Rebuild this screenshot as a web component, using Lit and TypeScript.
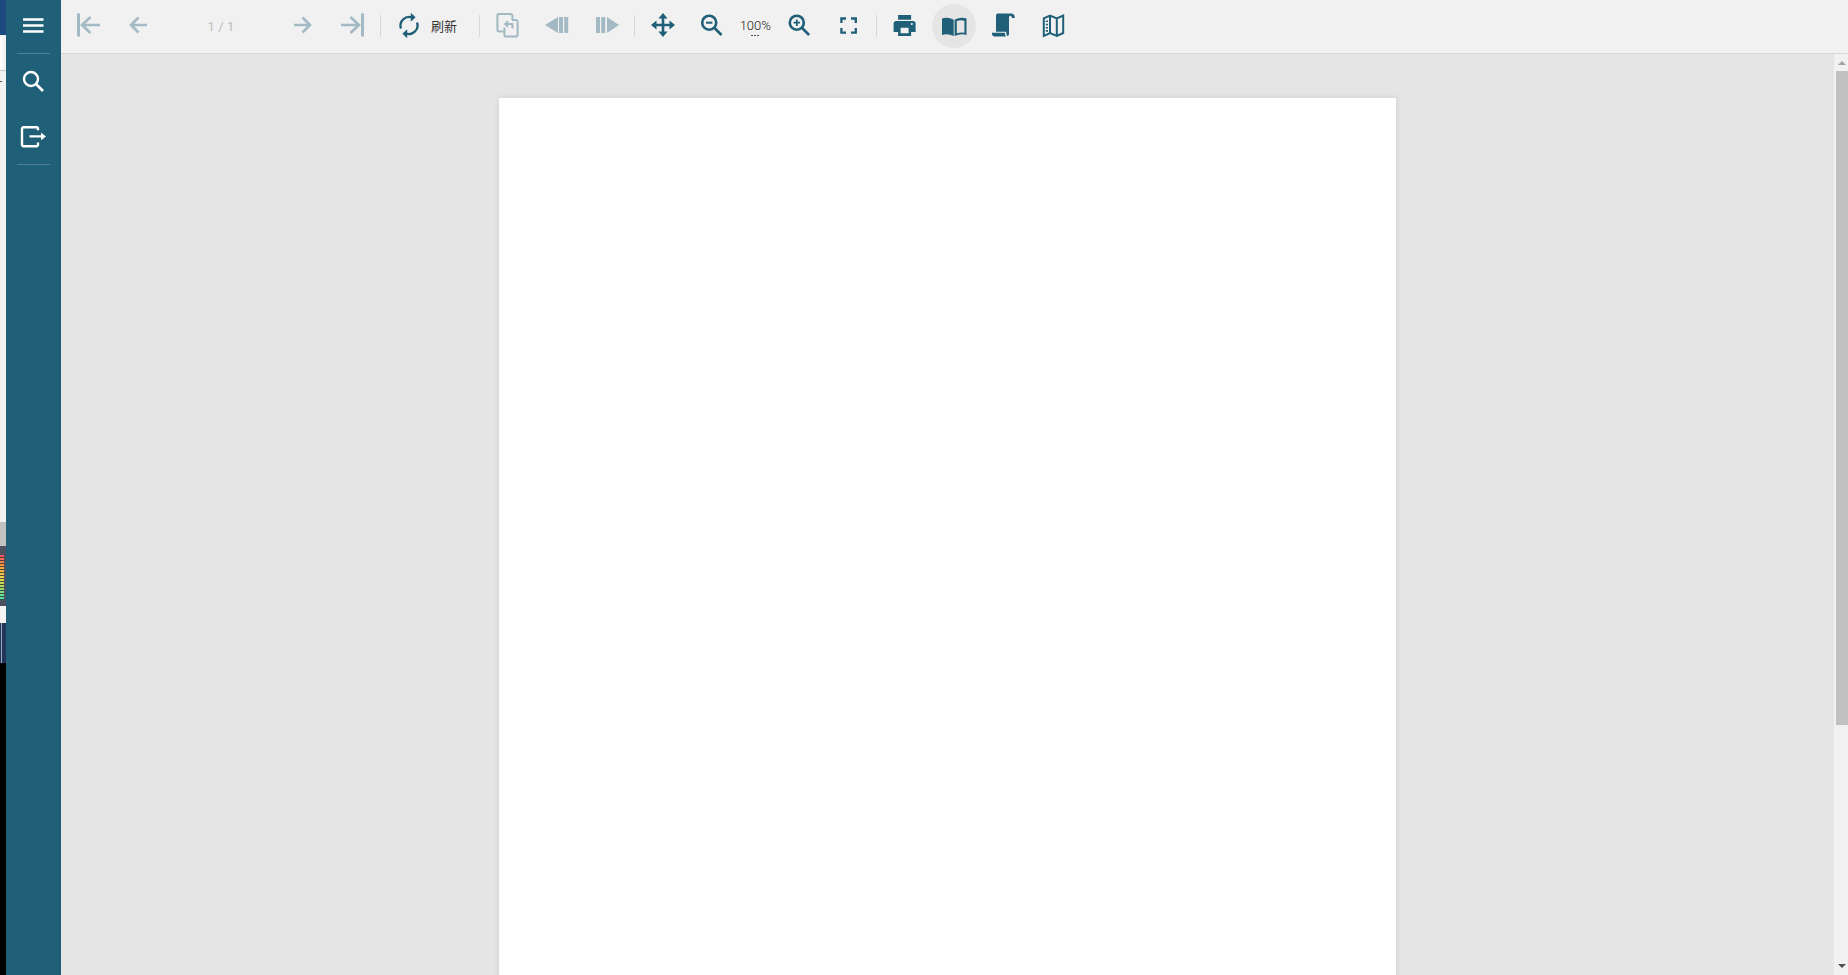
import { LitElement, html, css, svg } from "lit";
import { customElement } from "lit/decorators.js";

const ic = (body: unknown) => html`<svg class="ic" viewBox="0 .5 24 24" width="24" height="24">${body}</svg>`;

const first = svg`<rect x="1" y="0" width="3" height="23"/><path class="s" d="M6 11.5H24M14.5 3.5L6 11.5L14.5 19.5"/>`;
const prev = svg`<path class="s" d="M5 11.5H21M12.5 4L5 11.5L12.5 19"/>`;
const next = svg`<path class="s" d="M3 11.5H19M11.5 4L19 11.5L11.5 19"/>`;
const last = svg`<rect x="21" y="0" width="3" height="23"/><path class="s" d="M1 11.5H19M10.5 3.5L19 11.5L10.5 19.5"/>`;
const refresh = svg`<g transform="translate(1 0)"><path class="s t2" d="M4 15A8.6 8.6 0 0 1 15.5 4.2"/><path d="M13.8 -.8L18.6 3.7L13.8 8.2Z"/><path class="s t2" d="M20 9A8.6 8.6 0 0 1 8.5 19.8"/><path d="M10.2 24.8L5.4 20.3L10.2 15.8Z"/></g>`;
const copy = svg`<path class="s t" d="M7.6 18H3.2A1.8 1.8 0 0 1 1.4 16.2V2.2A1.8 1.8 0 0 1 3.2 .4H14.6A1.8 1.8 0 0 1 16.4 2.2V6.4"/><path class="s t" d="M8.4 14V21.2A1.8 1.8 0 0 0 10.2 23H19.8A1.8 1.8 0 0 0 21.6 21.2V8.2A1.8 1.8 0 0 0 19.8 6.4H16"/><path class="s t" d="M16.4 15V10.4H9.4M12 7.6L9.2 10.4L12 13.2"/>`;
const stepPrev = svg`<path d="M0 11.5L13 3.5V19.5Z"/><rect x="14" y="3.5" width="4" height="16"/><rect x="19.2" y="3.5" width="4" height="16"/>`;
const stepNext = svg`<rect x="1" y="3.5" width="4" height="16"/><rect x="6.2" y="3.5" width="4" height="16"/><path d="M12 3.5L24 11.5L12 19.5Z"/>`;
const move = svg`<path class="s" d="M2 11.5H22M12 2V21.5"/><path d="M12 -.5L16.6 5H7.4ZM12 23.5L7.4 18H16.6ZM0 11.5L5.5 7V16ZM24 11.5L18.5 16V7Z"/>`;
const zoomOut = svg`<circle class="s" cx="9.2" cy="9.2" r="7"/><path class="s" d="M14.5 14.5L21.5 21.5"/><rect x="6" y="8.2" width="6.4" height="2"/>`;
const zoomIn = svg`<g transform="translate(.6 0)"><circle class="s" cx="9.2" cy="9.2" r="7"/><path class="s" d="M14.5 14.5L21.5 21.5"/><path d="M6 8.3H8.3V6H10.1V8.3H12.4V10.1H10.1V12.4H8.3V10.1H6Z"/></g>`;
const full = svg`<path class="s t2" d="M5.4 9.4V5H10M15 5H19.8V9.4M19.8 14.6V19.2H15M10 19.2H5.4V14.6"/>`;
const print = svg`<path transform="translate(.6 0)" d="M5.5 1.4H18.5V6.2H5.5ZM3.6 7.6H20.4A2.6 2.6 0 0 1 23 10.2V18.4H18.5V22.4H5.5V18.4H1V10.2A2.6 2.6 0 0 1 3.6 7.6ZM8 14.2V19.8H16V14.2ZM19.2 9.4A1.1 1.1 0 1 0 19.2 11.6A1.1 1.1 0 1 0 19.2 9.4Z" fill-rule="evenodd"/>`;
const book = svg`<path fill-rule="evenodd" d="M0 5A16 16 0 0 1 11.7 6.2V22.5A18 18 0 0 0 0 21.4ZM12.6 6.2A16 16 0 0 1 24.5 5V21.4A18 18 0 0 0 12.6 22.5ZM14.8 7.6V19.8A18 18 0 0 1 22.4 19.2V7.2A14 14 0 0 0 14.8 7.6Z"/>`;
const scroll = svg`<path d="M6.8 0H20.5C22.6 0 23.8 1.6 23.8 4.4L20.9 4.4C20.9 3.2 20.3 2.2 19.4 2.2C18.4 2.2 18 3 18 4.5V20.6C18 21.4 17.6 22.4 16.4 22.6C15.6 21.4 15.2 20.2 15.2 18.2H5V2.5C5 1 5.6 0 6.8 0Z"/><path d="M1 19.2H13.8C13.9 20.6 14.3 21.8 15 23H3.8C2 23 .7 21.2 1 19.2Z"/>`;
const map = svg`<g transform="translate(.8 0)"><path class="s t" d="M2 4.8L8.2 2L15 4.8L21.4 2V19.5L15 22.5L8.2 19.5L2 22.5ZM8.2 2V19.5M15 4.8V22.5"/><path d="M4 7H6.2V8.6H4ZM4 10.2H6.2V11.8H4ZM4 13.4H6.2V15H4ZM4 16.6H6.2V18.2H4Z"/></g>`;

@customElement("app-root")
export class AppRoot extends LitElement {
  static styles = css`
    :host { display: block; height: 100vh; overflow: hidden; font-family: Roboto, "Noto Sans CJK SC", sans-serif; }
    .app { display: flex; height: 100%; }
    .strip { width: 6px; flex: none; display: flex; flex-direction: column; background: #f2f2f2; }
    .blue { height: 35px; background: #1c4a80; }
    .pale { height: 36px; background: linear-gradient(90deg, #fff, #eee); border-bottom: 1px solid #c8c8c8; box-sizing: border-box; }
    .rest { height: 451px; background: #f2f2f2; padding-top: 10px; box-sizing: border-box; }
    .tick { width: 2px; height: 1px; background: #555; }
    .grey { height: 24px; background: #c2c2c2; }
    .eq { height: 60px; background: #4c5160; padding: 9px 2px 6px 0; box-sizing: border-box; }
    .bars { height: 45px; width: 4px; background: repeating-linear-gradient(180deg, transparent 0 2px, rgba(40,44,56,.8) 2px 3px), linear-gradient(180deg, #f0525e, #f5a13c 25%, #ead44e 50%, #a8dc62 70%, #48e0b0); }
    .white { height: 17px; background: #f4f4f4; }
    .navy { height: 40px; background: linear-gradient(90deg, #23345a 0 1px, #9aa8c0 1px 2px, #23345a 2px); }
    .black { flex: 1; background: #000; }
    .side { width: 55px; flex: none; background: #1f5f78; display: flex; flex-direction: column; align-items: center; }
    .sb { width: 55px; height: 55px; display: flex; align-items: center; justify-content: center; padding-right: 1px; box-sizing: border-box; }
    .sb.top { height: 53px; padding-bottom: 6px; }
    .sb.find { padding-bottom: 2px; }
    .rule { width: 33px; height: 1px; flex: none; background: #4f8094; }
    .sb svg { fill: none; stroke: #fff; stroke-width: 2.4; }
    .main { flex: 1; min-width: 0; display: flex; flex-direction: column; }
    .bar { height: 54px; flex: none; box-sizing: border-box; border-bottom: 1px solid #dadada; padding-bottom: 1px; background: #f1f1f1; display: flex; align-items: center; gap: 5.5px; padding-left: 5px; }
    .btn { width: 44px; height: 44px; flex: none; display: flex; align-items: center; justify-content: center; border-radius: 50%; color: #1f5f78; }
    .btn.on { background: #e5e5e5; }
    .off { opacity: .37; }
    .ic { fill: currentColor; overflow: visible; display: block; }
    .ic .s { fill: none; stroke: currentColor; stroke-width: 2.6; }
    .ic .t { stroke-width: 2; }
    .ic .t2 { stroke-width: 2.3; }
    .sep { width: 1px; height: 22px; flex: none; background: #d8d8d8; }
    .pager { width: 110px; flex: none; display: flex; justify-content: center; padding-left: 2px; box-sizing: border-box; font-size: 13px; color: #bbb; letter-spacing: .1px; }
    .refresh { display: flex; align-items: center; width: 87.5px; flex: none; }
    .label { font-size: 13px; color: #333; font-family: "Noto Sans CJK SC", sans-serif; padding: 0 0 2px 1px; }
    .pct { width: 31.5px; flex: none; display: flex; flex-direction: column; align-items: center; font-size: 13px; font-weight: 300; color: #222; line-height: 15px; padding-top: 3px; box-sizing: border-box; }
    .dots { display: flex; gap: 1px; margin-top: 2px; height: 2px; }
    .dots i { width: 2px; height: 1px; background: #555; }
    .view { flex: 1; min-height: 0; display: flex; }
    .canvas { flex: 1; background: #e5e5e5; display: flex; justify-content: center; padding-top: 44px; overflow: hidden; }
    .page { width: 897px; height: 1270px; flex: none; background: #fff; box-shadow: 0 0 6px rgba(0,0,0,.1); }
    .scroll { width: 14px; flex: none; background: #f1f1f1; display: flex; flex-direction: column; align-items: flex-end; padding-top: 7px; box-sizing: border-box; }
    .up, .down { align-self: center; margin-left: 2px; width: 0; height: 0; border-left: 4px solid transparent; border-right: 4px solid transparent; }
    .up { border-bottom: 4px solid #a3a3a3; }
    .thumb { width: 12px; height: 654px; background: #c1c1c1; margin-top: 6px; }
    .gap { flex: 1; }
    .down { border-top: 4px solid #505050; margin-bottom: 7px; }
  `;

  render() {
    return html`<div class="app">
      <div class="strip">
        <div class="blue"></div><div class="pale"></div>
        <div class="rest"><div class="tick"></div></div>
        <div class="grey"></div>
        <div class="eq"><div class="bars"></div></div>
        <div class="white"></div><div class="navy"></div><div class="black"></div>
      </div>
      <nav class="side">
        <div class="sb top"><svg width="24" height="24" viewBox="0 0 24 24"><path d="M2 7.5H22.5M2 13.5H22.5M2 19.5H22.5" stroke-width="2.3"/></svg></div>
        <div class="rule"></div>
        <div class="sb find"><svg width="24" height="24" viewBox="0 0 24 24"><circle cx="10" cy="10" r="7"/><path d="M15 15L22 22" stroke-width="2.6"/></svg></div>
        <div class="sb"><svg width="28" height="24" viewBox="0 0 28 24"><path d="M19 5.2V3.8A1.6 1.6 0 0 0 17.4 2.2H4.6A1.6 1.6 0 0 0 3 3.8V19.6A1.6 1.6 0 0 0 4.6 21.2H17.4A1.6 1.6 0 0 0 19 19.6V17.5M10.5 11.4H24" /><path d="M22 7.5L27 11.4L22 15.3Z" fill="#fff" stroke="none"/></svg></div>
        <div class="rule"></div>
      </nav>
      <div class="main">
        <div class="bar">
          <div class="btn off">${ic(first)}</div>
          <div class="btn off">${ic(prev)}</div>
          <div class="pager">1 / 1</div>
          <div class="btn off">${ic(next)}</div>
          <div class="btn off">${ic(last)}</div>
          <div class="sep"></div>
          <div class="refresh"><div class="btn">${ic(refresh)}</div><span class="label">刷新</span></div>
          <div class="sep"></div>
          <div class="btn off">${ic(copy)}</div>
          <div class="btn off">${ic(stepPrev)}</div>
          <div class="btn off">${ic(stepNext)}</div>
          <div class="sep"></div>
          <div class="btn">${ic(move)}</div>
          <div class="btn">${ic(zoomOut)}</div>
          <div class="pct"><span>100%</span><div class="dots"><i></i><i></i><i></i></div></div>
          <div class="btn">${ic(zoomIn)}</div>
          <div class="btn">${ic(full)}</div>
          <div class="sep"></div>
          <div class="btn">${ic(print)}</div>
          <div class="btn on">${ic(book)}</div>
          <div class="btn">${ic(scroll)}</div>
          <div class="btn">${ic(map)}</div>
        </div>
        <div class="view">
          <div class="canvas"><div class="page"></div></div>
          <div class="scroll"><div class="up"></div><div class="thumb"></div><div class="gap"></div><div class="down"></div></div>
        </div>
      </div>
    </div>`;
  }
}
